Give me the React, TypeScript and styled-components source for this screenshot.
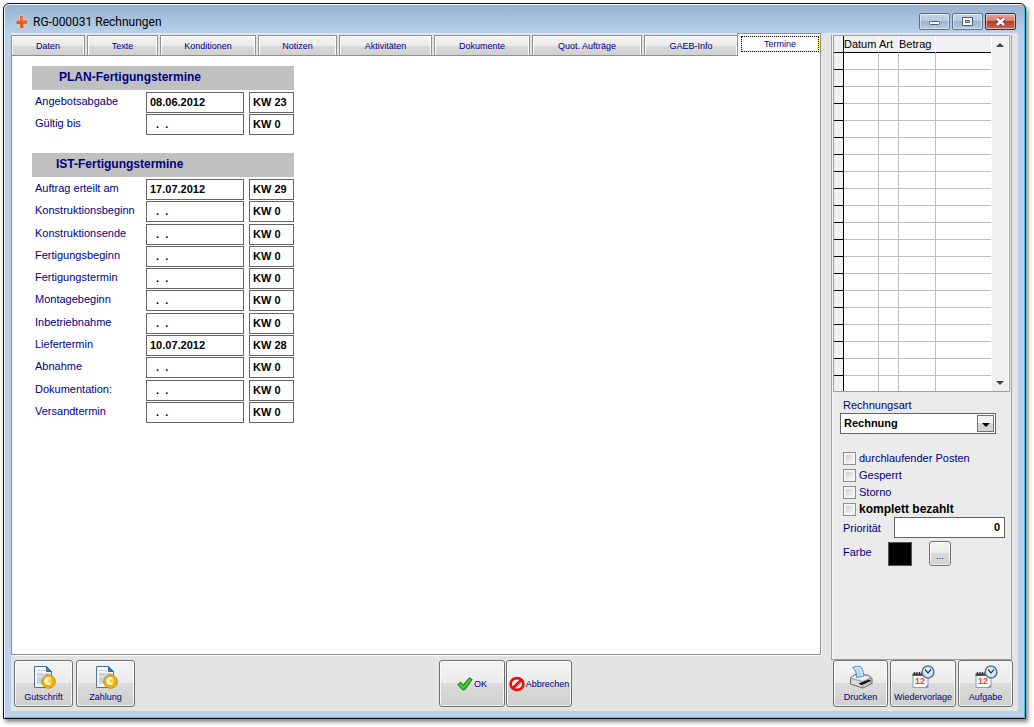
import React, { useState } from 'react';
import styled, { createGlobalStyle, css } from 'styled-components';

const NAVY = '#000080';
const FRAME = '#b9d1ea';
const FACE = '#e4e4e4';
const LINE = '#8e8e94';

const Global = createGlobalStyle`
  *, *::before, *::after { box-sizing: border-box; }
  body {
    margin: 0;
    background: #fff;
    font-family: "Liberation Sans", Arial, sans-serif;
    font-size: 11px;
    line-height: 13px;
    color: ${NAVY};
  }
  button, input, select { font: inherit; color: inherit; margin: 0; }
`;

const Desktop = styled.div`
  min-height: 100vh;
  padding: 3px 8px 8px 3px;
  display: flex;
`;

const Window = styled.main`
  flex: 1;
  min-width: 0;
  display: flex;
  flex-direction: column;
  padding: 1px 7px 7px;
  border: 1px solid #101418;
  border-radius: 6px 6px 0 0;
  background: ${FRAME};
  box-shadow: inset 1px 1px 0 #f2f7fc, inset -1px -1px 0 #35c6e4, 2px 3px 4px rgba(0, 0, 0, 0.5);
`;

const TitleBar = styled.header`
  height: 28px;
  margin: 0 -6px;
  padding: 0 8px 0 10px;
  display: flex;
  align-items: center;
  gap: 4px;
  border-radius: 4px 4px 0 0;
  background: linear-gradient(#97b1cf, ${FRAME});
`;

const Title = styled.h1`
  flex: 1;
  margin: 0;
  padding-top: 5px;
  font: 400 12px/16px Roboto, "Noto Sans", sans-serif;
  color: #000;
`;

const CaptionButtons = styled.div`
  display: flex;
  gap: 2px;
  padding-top: 5px;
`;

const CaptionButton = styled.button<{ $danger?: boolean }>`
  width: 31px;
  height: 17px;
  padding: 0;
  display: grid;
  place-items: center;
  border: 1px solid ${p => (p.$danger ? '#5c2420' : '#5b708a')};
  border-radius: 2px;
  box-shadow: inset 0 0 0 1px rgba(255, 255, 255, 0.5);
  background: ${p =>
    p.$danger
      ? 'linear-gradient(#e3a79b 0, #d5796a 50%, #b83a23 50%, #cc6b50 100%)'
      : 'linear-gradient(#c3d4e7 0, #b6cae0 50%, #9cb4d0 50%, #b4cbe4 100%)'};
`;

const Client = styled.div`
  flex: 1;
  display: flex;
  flex-direction: column;
  background: ${FACE};
`;

const Main = styled.div`
  flex: 1;
  display: flex;
  gap: 10px;
  padding-right: 6px;
`;

const Book = styled.section`
  flex: 1;
  min-width: 0;
  display: flex;
  flex-direction: column;
  padding-bottom: 5px;
`;

const TabStrip = styled.div`
  height: 22px;
  display: flex;
  align-items: flex-end;
  gap: 2px;
`;

const tabFont = css`
  font-size: 9px;
  line-height: 12px;
  color: ${NAVY};
`;

const Tab = styled.button<{ $w: number; $active?: boolean }>`
  ${tabFont}
  flex: 0 1 ${p => p.$w}px;
  height: 20px;
  padding: 0;
  white-space: nowrap;
  border: 1px solid ${LINE};
  border-bottom: 0;
  border-radius: 0;
  background: linear-gradient(#f3f3f3 0, #ebebeb 50%, #dadada 50%, #d0d0d0 100%);
  box-shadow: inset 1px 1px 0 #fff, inset -1px 0 0 #fff;
  ${p =>
    p.$active &&
    css`
      flex: 1 1 0;
      height: 23px;
      margin: 0 0 -1px -3px;
      padding: 2px 1px 4px 3px;
      background: #fff;
      position: relative;
    `}
`;

const Focus = styled.span`
  display: block;
  line-height: 14px;
  border: 1px dotted #000;
  background: linear-gradient(#fff, #fff) padding-box, #ff0 border-box;
`;

const Page = styled.div`
  flex: 1;
  padding: 10px 20px;
  background: #fff;
  border: 1px solid ${LINE};
  box-shadow: 1px 1px 0 #fff;
`;

const Section = styled.section`
  width: 262px;
  margin-bottom: 18px;
`;

const SectionTitle = styled.h2<{ $indent: number }>`
  height: 24px;
  margin: 0 0 2px;
  padding: 0 0 2px ${p => p.$indent}px;
  background: #c0c0c0;
  font-size: 12px;
  line-height: 22px;
`;

const Rows = styled.div<{ $h: number }>`
  min-height: ${p => p.$h}px;
  display: flex;
  flex-direction: column;
  justify-content: space-between;
`;

const Row = styled.div`
  display: flex;
  gap: 5px;
  padding-left: 3px;
`;

const RowLabel = styled.label`
  width: 106px;
  flex: none;
  line-height: 19px;
  white-space: nowrap;
`;

const TextBox = styled.input`
  height: 21px;
  padding: 0 3px 1px;
  border: 1px solid #646464;
  border-radius: 0;
  background: #fff;
  color: #000;
  font-weight: 700;
`;

const DateBox = styled(TextBox)`
  width: 98px;
`;

const WeekBox = styled(TextBox)`
  width: 45px;
`;

const Side = styled.aside`
  width: 181px;
  flex: none;
  margin-top: 2px;
  display: flex;
  flex-direction: column;
  padding: 0 1px;
  border: 1px solid #a0a0a0;
  border-top: 0;
  background: #ebebeb;
  box-shadow: inset 1px 0 0 #f8f8f8;
`;

const GridFrame = styled.div`
  height: 357px;
  display: flex;
  border: 1px solid #a0a0a0;
  background: #fff;
  overflow: hidden;
`;

const Ledger = styled.table`
  flex: 1;
  border-collapse: separate;
  border-spacing: 0;
  table-layout: fixed;
  width: 157px;
  height: 100%;
  color: #000;

  th, td {
    height: 17px;
    padding: 0;
    line-height: 16px;
    font-weight: 400;
    text-align: left;
    white-space: nowrap;
  }
  thead th {
    border-bottom: 1px solid #000;
    border-right: 1px solid #fff;
    background: #f0f0f0;
  }
  tbody td {
    border-right: 1px solid #c0c0c0;
    border-bottom: 1px solid #c0c0c0;
  }
  td:last-child, th:last-child { border-right: 0; }
  tr > :first-child {
    background: #f0f0f0;
    border-right: 1px solid #000;
    border-bottom: 1px solid #000;
  }
  tbody tr:last-child td { height: 15px; border-bottom: 0; }
`;

const ScrollBar = styled.div`
  width: 18px;
  flex: none;
  display: flex;
  flex-direction: column;
  justify-content: space-between;
  background: #f0f0f0;
  border-left: 1px solid #fff;
  border-right: 1px solid #fff;
`;

const ScrollArrow = styled.button`
  height: 17px;
  padding: 0;
  border: 0;
  background: none;
  display: grid;
  place-items: center;
`;

const SideForm = styled.form`
  padding: 7px 4px 0 7px;
`;

const FieldLabel = styled.label`
  display: block;
  padding-left: 3px;
  margin-bottom: 1px;
`;

const SelectWrap = styled.div`
  position: relative;
  width: 156px;
  height: 21px;
`;

const Select = styled.select`
  appearance: none;
  width: 100%;
  height: 21px;
  padding: 0 20px 0 3px;
  border: 1px solid #646464;
  border-radius: 0;
  background: #fff;
  color: #000;
  font-weight: 700;
`;

const SelectArrow = styled.span`
  position: absolute;
  top: 2px;
  right: 2px;
  width: 17px;
  height: 17px;
  display: grid;
  place-items: center;
  padding-top: 2px;
  border: 1px solid #707070;
  background: linear-gradient(#f3f3f3 50%, #d6d6d6 50%);
  pointer-events: none;
`;

const Checks = styled.div`
  margin-top: 17px;
  padding-left: 3px;
  display: flex;
  flex-direction: column;
  gap: 2px;
`;

const CheckLabel = styled.label<{ $strong?: boolean }>`
  height: 15px;
  display: flex;
  align-items: center;
  gap: 3px;
  white-space: nowrap;
  ${p => p.$strong && css`font-size: 12px; font-weight: 700; color: #000;`}
`;

const CheckBox = styled.input`
  appearance: none;
  width: 13px;
  height: 13px;
  border: 1px solid #8e8f8f;
  background: linear-gradient(135deg, #cbcfd5, #f6f6f6) content-box, #f4f4f4;
  padding: 2px;
  &:checked { background: ${NAVY} content-box; }
`;

const SideRow = styled.div`
  display: flex;
  align-items: flex-start;
  padding-left: 3px;
  margin-bottom: 2px;
`;

const SideRowLabel = styled.label<{ $w: number }>`
  width: ${p => p.$w}px;
  flex: none;
  line-height: 22px;
`;

const PriorityBox = styled(TextBox)`
  flex: 1;
  min-width: 0;
  margin-right: 1px;
  text-align: right;
  padding-right: 4px;
`;

const Swatch = styled.div`
  width: 24px;
  height: 24px;
  margin: 1px 17px 0 0;
  background: #000;
  border: 1px solid #555;
`;

const PushButton = styled.button`
  ${tabFont}
  border: 1px solid #707070;
  border-radius: 3px;
  background: linear-gradient(#f4f4f4 0, #ebebeb 48%, #dcdcdc 48%, #cfcfcf 100%);
  box-shadow: inset 0 0 0 1px rgba(255, 255, 255, 0.75);
  padding: 0;
  white-space: nowrap;
`;

const MoreButton = styled(PushButton)`
  width: 22px;
  height: 25px;
  padding-top: 4px;
`;

const Footer = styled.footer`
  display: grid;
  grid-template-columns: 425fr auto 441fr;
  padding: 0 5px 4px 3px;
`;

const Group = styled.div<{ $gap: number; $end?: boolean }>`
  display: flex;
  gap: ${p => p.$gap}px;
  justify-content: ${p => (p.$end ? 'flex-end' : 'flex-start')};
`;

const ToolButton = styled(PushButton)<{ $w: number; $inline?: boolean }>`
  width: ${p => p.$w}px;
  height: 47px;
  display: flex;
  flex-direction: ${p => (p.$inline ? 'row' : 'column')};
  align-items: center;
  justify-content: center;
  gap: ${p => (p.$inline ? 1 : 2)}px;
  svg { flex: none; }
`;

const TitleIcon = styled.svg`
  flex: none;
  margin-top: 5px;
`;

const AppIcon = () => (
  <TitleIcon width="14" height="16" viewBox="0 0 14 16">
    <path d="M4 1.200l4.500-.7.700 4.500 4.300.5-.5 5-4 0L9.500 15l-4.800.5L4.400 11.200.8 11 .4 6.200 4.400 5.800z" fill="#d9d3d4" />
    <path d="M4.800 2l3-.4.700 4.400 4 .3-.3 3.400-3.800.1.100 4.300-3.200.4-.3-4.200-3.500-.3-.2-3.200L5.300 6.500z" fill="#e9581f" />
    <path d="M6 3l1 0 .6 4 3.900.3" fill="none" stroke="#f58c54" />
  </TitleIcon>
);

const InvoiceIcon = () => (
  <svg width="24" height="24" viewBox="0 0 24 24">
    <path d="M2.500 1.500h12l5 5v16h-17z" fill="#f1f6fc" stroke="#56708e" />
    <path d="M14.500 1.500v5h5z" fill="#3f7fb4" stroke="#2f6694" />
    <path d="M5 5.500h8" stroke="#c9d6e4" />
    <path d="M5 8h12v11H5z" fill="#c2d2e7" />
    <path d="M5 11.500h12M12 8v11" stroke="#e6eef8" />
    <circle cx="16.500" cy="16.500" r="6.800" fill="#f0b81c" stroke="#c98d08" />
    <circle cx="16" cy="16" r="4.900" fill="#f9d03e" stroke="#dba516" />
    <path d="M18.200 13.800a2.800 2.800 0 1 0 0 4.400" fill="none" stroke="#fffdf2" strokeWidth="1.800" />
    <path d="M12.300 16h4" stroke="#fffdf2" />
  </svg>
);

const PrinterIcon = () => (
  <svg width="24" height="24" viewBox="0 0 24 24">
    <path d="M1.500 13L6 9.500l13 .5 4 3v5.500l-9 4.500L1.500 19z" fill="#bdbdc0" stroke="#6d6d72" />
    <path d="M1.500 13L6 10l13 .5 3.500 2-9 4z" fill="#ececee" stroke="#88888d" strokeWidth=".7" />
    <path d="M3.500 2.500Q8 .5 11.500 1.500q2.500 2 3.500 9.500l-7.500 1.500Q7.500 5 3.500 2.500z" fill="#b5daf8" stroke="#5b92c9" />
    <path d="M6 3q4-1.500 5.500.500 1.500 2.500 2 7" fill="none" stroke="#e6f4ff" />
    <path d="M2 14l11.500 3.500v4.500L2 18.500z" fill="#dcdcdf" />
    <path d="M9.500 18.500l10.500-4 2 1.200-9.500 4.500z" fill="#161618" />
    <path d="M13 21l7-3.300 1.800.6-6.800 3.600z" fill="#fff" stroke="#77777b" strokeWidth=".5" />
    <circle cx="20.500" cy="13.200" r=".8" fill="#e38b3b" />
  </svg>
);

const CalendarIcon = () => (
  <svg width="24" height="24" viewBox="0 0 24 24">
    <path d="M2 9h15v13.500H2z" fill="#f6f8fc" stroke="#8aa0c4" />
    <path d="M2 22.500h15V19l-3 3z" fill="#7f9cca" />
    <path d="M1.500 8.500h15v2.500h-15z" fill="#55575e" />
    <path d="M3.500 7v3M6 7v3M8.500 7v3M11 7v3" stroke="#2a2b30" strokeWidth="1.300" />
    <text x="4" y="19" fontFamily="Liberation Sans, sans-serif" fontSize="9" fontWeight="700" fill="#ee4a12">12</text>
    <circle cx="17" cy="7" r="5.900" fill="#bfe2f7" stroke="#64768a" strokeWidth="1.500" />
    <circle cx="16.500" cy="6.500" r="4" fill="#dcf1fd" />
    <path d="M14 4.500l3 3.500 3-3.500" fill="none" stroke="#28415e" strokeWidth="1.200" />
  </svg>
);

const OkIcon = () => (
  <svg width="16" height="14" viewBox="0 0 16 14">
    <path d="M.8 7.500L3.500 5.200l2.800 2.600L12.300.8 15.200 2.500 8 12.500Q6.500 13.500 5 12.500z" fill="#2fb52b" stroke="#14801a" strokeLinejoin="round" />
    <path d="M2.500 7.300l3.700 3.500L13 2.500" fill="none" stroke="#74dc5c" />
  </svg>
);

const CancelIcon = () => (
  <svg width="16" height="16" viewBox="0 0 16 16">
    <ellipse cx="8" cy="8" rx="6.400" ry="5.900" fill="#f4f4f4" stroke="#f30b0b" strokeWidth="2.600" />
    <path d="M3.500 12.300l9-8.600" stroke="#f30b0b" strokeWidth="2.600" />
    <path d="M5.800 13l6.800-6.500" stroke="#777" strokeWidth=".7" />
  </svg>
);

const Triangle = ({ up }: { up?: boolean }) => (
  <svg width="8" height="4" viewBox="0 0 8 4">
    <path d={up ? 'M0 4l4-4 4 4z' : 'M0 0h8L4 4z'} fill="#444" />
  </svg>
);

const tabs: [string, number][] = [
  ['Daten', 74],
  ['Texte', 71],
  ['Konditionen', 96],
  ['Notizen', 79],
  ['Aktivitäten', 93],
  ['Dokumente', 96],
  ['Quot. Aufträge', 110],
  ['GAEB-Info', 94],
  ['Termine', 84],
];

const EMPTY = '  .  .';

type Entry = { label: string; date?: string; week: number };

const planned: Entry[] = [
  { label: 'Angebotsabgabe', date: '08.06.2012', week: 23 },
  { label: 'Gültig bis', week: 0 },
];

const actual: Entry[] = [
  { label: 'Auftrag erteilt am', date: '17.07.2012', week: 29 },
  { label: 'Konstruktionsbeginn', week: 0 },
  { label: 'Konstruktionsende', week: 0 },
  { label: 'Fertigungsbeginn', week: 0 },
  { label: 'Fertigungstermin', week: 0 },
  { label: 'Montagebeginn', week: 0 },
  { label: 'Inbetriebnahme', week: 0 },
  { label: 'Liefertermin', date: '10.07.2012', week: 28 },
  { label: 'Abnahme', week: 0 },
  { label: 'Dokumentation:', week: 0 },
  { label: 'Versandtermin', week: 0 },
];

function DateSection(props: { id: string; title: string; indent: number; height: number; entries: Entry[] }) {
  return (
    <Section>
      <SectionTitle $indent={props.indent}>{props.title}</SectionTitle>
      <Rows $h={props.height}>
        {props.entries.map((e, i) => (
          <Row key={e.label}>
            <RowLabel htmlFor={`${props.id}-${i}`}>{e.label}</RowLabel>
            <DateBox id={`${props.id}-${i}`} defaultValue={e.date ?? EMPTY} />
            <WeekBox aria-label={`${e.label} Kalenderwoche`} defaultValue={`KW ${e.week}`} />
          </Row>
        ))}
      </Rows>
    </Section>
  );
}

export default function App() {
  const [active, setActive] = useState('Termine');

  return (
    <>
      <Global />
      <Desktop>
        <Window>
          <TitleBar>
            <AppIcon />
            <Title>RG-000031 Rechnungen</Title>
            <CaptionButtons>
              <CaptionButton aria-label="Minimieren">
                <svg width="13" height="11" viewBox="0 0 13 11">
                  <rect x="1.500" y="5.500" width="10" height="3" rx="1" fill="#fff" stroke="#535b66" />
                </svg>
              </CaptionButton>
              <CaptionButton aria-label="Maximieren">
                <svg width="13" height="11" viewBox="0 0 13 11">
                  <path d="M1.500 1.500h10v8h-10z" fill="#fff" stroke="#535b66" />
                  <path d="M4.500 4.500h4v2h-4z" fill="#b6cae0" stroke="#535b66" />
                </svg>
              </CaptionButton>
              <CaptionButton $danger aria-label="Schließen">
                <svg width="13" height="11" viewBox="0 0 13 11">
                  <path d="M3 2.500l7 6.500M10 2.500l-7 6.500" stroke="#5a3638" strokeWidth="4.400" />
                  <path d="M3 2.500l7 6.500M10 2.500l-7 6.500" stroke="#fff" strokeWidth="2.600" />
                </svg>
              </CaptionButton>
            </CaptionButtons>
          </TitleBar>

          <Client>
            <Main>
              <Book>
                <TabStrip role="tablist">
                  {tabs.map(([name, w]) => (
                    <Tab
                      key={name}
                      role="tab"
                      aria-selected={name === active}
                      $w={w}
                      $active={name === active}
                      onClick={() => setActive(name)}
                    >
                      {name === active ? <Focus>{name}</Focus> : name}
                    </Tab>
                  ))}
                </TabStrip>
                <Page role="tabpanel">
                  <DateSection id="plan" title="PLAN-Fertigungstermine" indent={27} height={43} entries={planned} />
                  <DateSection id="ist" title="IST-Fertigungstermine" indent={24} height={244} entries={actual} />
                </Page>
              </Book>

              <Side>
                <GridFrame>
                  <Ledger>
                    <colgroup>
                      <col style={{ width: 10 }} />
                      <col style={{ width: 35 }} />
                      <col style={{ width: 20 }} />
                      <col style={{ width: 37 }} />
                      <col />
                    </colgroup>
                    <thead>
                      <tr>
                        <th />
                        <th>Datum</th>
                        <th>Art</th>
                        <th>Betrag</th>
                        <th />
                      </tr>
                    </thead>
                    <tbody>
                      {Array.from({ length: 20 }, (_, i) => (
                        <tr key={i}>
                          <td />
                          <td />
                          <td />
                          <td />
                          <td />
                        </tr>
                      ))}
                    </tbody>
                  </Ledger>
                  <ScrollBar>
                    <ScrollArrow aria-label="Nach oben"><Triangle up /></ScrollArrow>
                    <ScrollArrow aria-label="Nach unten"><Triangle /></ScrollArrow>
                  </ScrollBar>
                </GridFrame>

                <SideForm onSubmit={e => e.preventDefault()}>
                  <FieldLabel htmlFor="kind">Rechnungsart</FieldLabel>
                  <SelectWrap>
                    <Select id="kind"><option>Rechnung</option></Select>
                    <SelectArrow>
                      <svg width="8" height="4" viewBox="0 0 8 4"><path d="M0 0h8L4 4z" /></svg>
                    </SelectArrow>
                  </SelectWrap>
                  <Checks>
                    <CheckLabel><CheckBox type="checkbox" />durchlaufender Posten</CheckLabel>
                    <CheckLabel><CheckBox type="checkbox" />Gesperrt</CheckLabel>
                    <CheckLabel><CheckBox type="checkbox" />Storno</CheckLabel>
                    <CheckLabel $strong><CheckBox type="checkbox" />komplett bezahlt</CheckLabel>
                  </Checks>
                  <SideRow>
                    <SideRowLabel $w={51} htmlFor="prio">Priorität</SideRowLabel>
                    <PriorityBox id="prio" defaultValue="0" />
                  </SideRow>
                  <SideRow>
                    <SideRowLabel $w={45} htmlFor="color">Farbe</SideRowLabel>
                    <Swatch />
                    <MoreButton id="color" type="button">...</MoreButton>
                  </SideRow>
                </SideForm>
              </Side>
            </Main>

            <Footer>
              <Group $gap={3}>
                <ToolButton $w={59}><InvoiceIcon />Gutschrift</ToolButton>
                <ToolButton $w={59}><InvoiceIcon />Zahlung</ToolButton>
              </Group>
              <Group $gap={1}>
                <ToolButton $w={66} $inline><OkIcon />OK</ToolButton>
                <ToolButton $w={66} $inline><CancelIcon />Abbrechen</ToolButton>
              </Group>
              <Group $gap={2} $end>
                <ToolButton $w={55}><PrinterIcon />Drucken</ToolButton>
                <ToolButton $w={66}><CalendarIcon />Wiedervorlage</ToolButton>
                <ToolButton $w={55}><CalendarIcon />Aufgabe</ToolButton>
              </Group>
            </Footer>
          </Client>
        </Window>
      </Desktop>
    </>
  );
}
